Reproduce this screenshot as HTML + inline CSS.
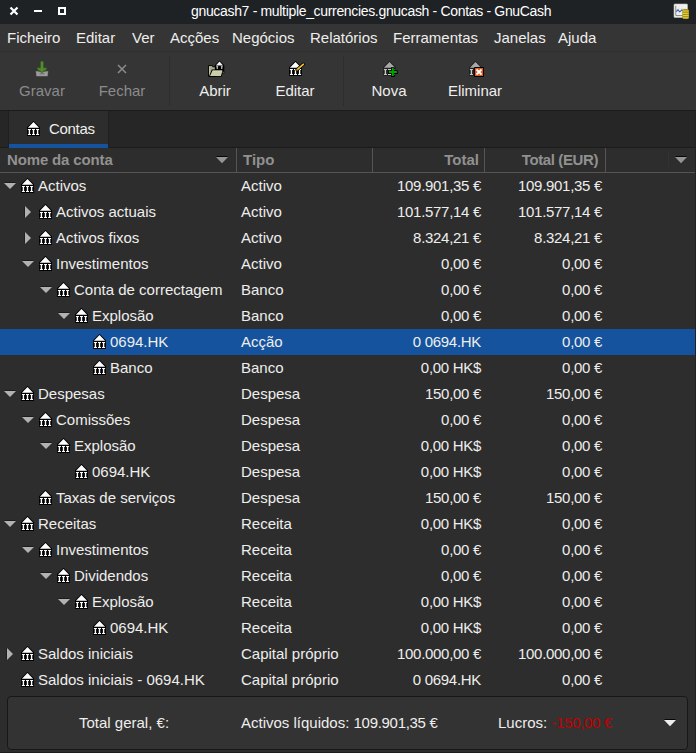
<!DOCTYPE html>
<html><head><meta charset="utf-8"><style>
*{margin:0;padding:0;box-sizing:border-box}
html,body{width:696px;height:753px;overflow:hidden;background:#2d2d2d;font-family:"Liberation Sans",sans-serif;font-size:15px;color:#eeeeec}
.a{position:absolute}
.t{position:absolute;white-space:nowrap;line-height:17px;height:17px}
.r{text-align:right}
.bk{position:absolute}
</style></head><body>

<div class="a" style="left:0;top:0;width:696px;height:24px;background:#1e2225"></div>
<svg class="a" style="left:9px;top:6px" width="10" height="10" viewBox="0 0 10 10"><path d="M1.5 1.5 L8.5 8.5 M8.5 1.5 L1.5 8.5" stroke="#fff" stroke-width="2.2"/></svg>
<div class="a" style="left:34px;top:10px;width:8px;height:2px;background:#fff"></div>
<div class="a" style="left:58px;top:7px;width:8px;height:8px;border:2px solid #fff"></div>
<div class="t" style="left:191px;top:3px;font-size:14px;letter-spacing:-0.33px;color:#ffffff">gnucash7 - multiple_currencies.gnucash - Contas - GnuCash</div>
<div class="a" style="left:0;top:24px;width:696px;height:28px;background:#353535"></div>
<div class="t" style="left:7px;top:29px;">Ficheiro</div>
<div class="t" style="left:76px;top:29px;">Editar</div>
<div class="t" style="left:132px;top:29px;">Ver</div>
<div class="t" style="left:170px;top:29px;">Acções</div>
<div class="t" style="left:232px;top:29px;">Negócios</div>
<div class="t" style="left:310px;top:29px;">Relatórios</div>
<div class="t" style="left:393px;top:29px;">Ferramentas</div>
<div class="t" style="left:494px;top:29px;">Janelas</div>
<div class="t" style="left:558px;top:29px;">Ajuda</div>
<div class="a" style="left:0;top:51px;width:696px;height:1px;background:#2f2f2f"></div>
<div class="a" style="left:0;top:52px;width:696px;height:58px;background:#353535"></div>
<div class="t" style="left:-8px;width:100px;text-align:center;top:82px;color:#8b8b8b">Gravar</div>
<div class="t" style="left:72px;width:100px;text-align:center;top:82px;color:#8b8b8b">Fechar</div>
<div class="t" style="left:165px;width:100px;text-align:center;top:82px;color:#eeeeec">Abrir</div>
<div class="t" style="left:245px;width:100px;text-align:center;top:82px;color:#eeeeec">Editar</div>
<div class="t" style="left:339px;width:100px;text-align:center;top:82px;color:#eeeeec">Nova</div>
<div class="t" style="left:425px;width:100px;text-align:center;top:82px;color:#eeeeec">Eliminar</div>
<div class="a" style="left:169px;top:56px;width:1px;height:50px;background:#2e2e2e"></div>
<svg class="a" style="left:34px;top:59px" width="16" height="19" viewBox="0 0 16 19"><path d="M1.5 12 L2.5 17.5 L13.5 17.5 L14.5 12 L12 12 L11.5 14 L4.5 14 L4 12 Z" fill="#8f8f8f" stroke="#3a3a3a" stroke-width="0.6"/><rect x="2.5" y="12.5" width="11" height="4.5" fill="#9c9c9c"/><rect x="5.5" y="14.3" width="5" height="1" fill="#6a6a6a"/><path d="M6.3 2.5 Q8 1.5 9.7 2.5 L9.7 8.5 L12.6 8.5 Q13.5 10 12 11.3 L8 13.6 L4 11.3 Q2.5 10 3.4 8.5 L6.3 8.5 Z" fill="#4a8228" stroke="#2f4a20" stroke-width="0.6"/><path d="M8 3 L8 12" stroke="#6a9a50" stroke-width="0.7"/></svg>
<svg class="a" style="left:117px;top:64px" width="10" height="10" viewBox="0 0 10 10"><path d="M1 1 L9 9 M9 1 L1 9" stroke="#8b8d8b" stroke-width="1.5"/></svg>
<svg class="a" style="left:207px;top:60px" width="18" height="18" viewBox="0 0 18 18"><path d="M1.2 5.2 L5.2 5.2 L6.4 6.4 L9 6.4 L9 16.8 L1.2 16.8 Z" fill="#000"/><path d="M2.1 6.1 L4.8 6.1 L5.9 7.3 L8.5 7.3 L8.5 10 L5.2 10 L3 15.9 L2.1 15.9 Z" fill="#a6aa88"/><path d="M2.5 6.5 L2.5 15.5" stroke="#d8dac4" stroke-width="0.6"/><path d="M12.5 0.4 L17.3 5.3 L17.3 13.3 L14.8 13.3 L14.8 10 L7.8 10 L7.8 5.3 Z" fill="#000"/><path d="M12.5 1.6 L16.1 5.4 L8.9 5.4 Z" fill="#f4f4f4"/><path d="M9 6.3h2.4l-0.7 1v1.8h-1v-1.8z M13.6 6.3h2.4l-0.7 1v1.8h-1v-1.8z" fill="#e8e8e8"/><circle cx="15.8" cy="12.3" r="0.7" fill="#ddd"/><path d="M4.8 9.6 L16.6 9.6 L14.6 16.8 L1.8 16.8 Z" fill="#000"/><path d="M5.5 10.4 L15.5 10.4 L13.9 15.9 L3 15.9 Z" fill="#c9cca6"/><path d="M5.8 10.9 L15 10.9" stroke="#e0e2cc" stroke-width="0.6"/></svg>
<svg class="a" style="left:289px;top:61px" width="13" height="15" viewBox="0 0 13 15"><path d="M6.5 -0.2 L13.2 6.5 L13.2 15.1 L-0.2 15.1 L-0.2 6.5 Z" fill="#000"/><path d="M6.5 1.1 L12.1 6.7 L0.9 6.7 Z" fill="#fff"/><path d="M0.9 7.9h3v1.1h-0.8v3.9h0.8v1.2h-3v-1.2h0.8v-3.9h-0.8z" fill="#fff"/><path d="M5 7.9h3v1.1h-0.8v3.9h0.8v1.2h-3v-1.2h0.8v-3.9h-0.8z" fill="#fff"/><path d="M9.1 7.9h3v1.1h-0.8v3.9h0.8v1.2h-3v-1.2h0.8v-3.9h-0.8z" fill="#fff"/></svg>
<svg class="a" style="left:294px;top:62px" width="11" height="11" viewBox="0 0 11 11"><path d="M3 7.8 L9.2 2.3" stroke="#000" stroke-width="3.2" stroke-linecap="round"/><path d="M3.2 7.6 L9.2 2.3" stroke="#f0c030" stroke-width="1.8" stroke-linecap="round"/><path d="M2.3 8.4 L3.3 7.5" stroke="#6a4a10" stroke-width="1"/></svg>
<svg class="a" style="left:383px;top:61px" width="13" height="15" viewBox="0 0 13 15"><path d="M6.5 -0.2 L13.2 6.5 L13.2 15.1 L-0.2 15.1 L-0.2 6.5 Z" fill="#202020"/><path d="M6.5 1.1 L12.1 6.7 L0.9 6.7 Z" fill="#a8a8a8"/><path d="M0.9 7.9h3v1.1h-0.8v3.9h0.8v1.2h-3v-1.2h0.8v-3.9h-0.8z" fill="#c8c8c8"/><path d="M5 7.9h3v1.1h-0.8v3.9h0.8v1.2h-3v-1.2h0.8v-3.9h-0.8z" fill="#c8c8c8"/><path d="M9.1 7.9h3v1.1h-0.8v3.9h0.8v1.2h-3v-1.2h0.8v-3.9h-0.8z" fill="#c8c8c8"/></svg>
<svg class="a" style="left:388px;top:67px" width="10" height="10" viewBox="0 0 10 10"><path d="M3 0.2h3.6v3.1h3.1v3.6h-3.1v3.1h-3.6v-3.1h-3.1v-3.6h3.1z" fill="#000"/><path d="M3.8 1.1h2v3h3v2h-3v3h-2v-3h-3v-2h3z" fill="#00a500"/></svg>
<svg class="a" style="left:469px;top:61px" width="13" height="15" viewBox="0 0 13 15"><path d="M6.5 -0.2 L13.2 6.5 L13.2 15.1 L-0.2 15.1 L-0.2 6.5 Z" fill="#202020"/><path d="M6.5 1.1 L12.1 6.7 L0.9 6.7 Z" fill="#a8a8a8"/><path d="M0.9 7.9h3v1.1h-0.8v3.9h0.8v1.2h-3v-1.2h0.8v-3.9h-0.8z" fill="#c8c8c8"/><path d="M5 7.9h3v1.1h-0.8v3.9h0.8v1.2h-3v-1.2h0.8v-3.9h-0.8z" fill="#c8c8c8"/><path d="M9.1 7.9h3v1.1h-0.8v3.9h0.8v1.2h-3v-1.2h0.8v-3.9h-0.8z" fill="#c8c8c8"/></svg>
<svg class="a" style="left:474px;top:67px" width="10" height="10" viewBox="0 0 10 10"><rect x="0" y="0" width="10" height="10" rx="1" fill="#000"/><rect x="1" y="1" width="8" height="8" fill="#e2561e"/><path d="M2.5 2.5 L7.5 7.5 M7.5 2.5 L2.5 7.5" stroke="#fff" stroke-width="1.8"/></svg>
<svg class="a" style="left:673px;top:3px" width="17" height="17" viewBox="0 0 17 17"><rect x="1" y="1" width="13.5" height="13.5" rx="0.8" fill="#f2f2ef" stroke="#bdbdbd" stroke-width="0.6"/><path d="M2.8 2.8 L2.8 12.6 L12.5 12.6" stroke="#7a7a7a" stroke-width="0.9" fill="none"/><path d="M6 2.5 V12 M9 2.5 V12 M3 5.5 H13 M3 9 H13" stroke="#dcdcdc" stroke-width="0.5"/><path d="M3.3 8.5 L5 6.8 L6.8 8.8 L8.8 7 L10 7.5" stroke="#3a5fb0" stroke-width="1.1" fill="none"/><rect x="9.3" y="6" width="6.7" height="10" rx="2" fill="#a89010"/><path d="M9.8 8h5.7 M9.8 10.3h5.7 M9.8 12.6h5.7 M9.8 14.8h5.7" stroke="#e8d84a" stroke-width="1"/></svg>
<div class="a" style="left:343px;top:56px;width:1px;height:50px;background:#2e2e2e"></div>
<div class="a" style="left:0;top:110px;width:696px;height:37px;background:#262626"></div>
<div class="a" style="left:0;top:110px;width:696px;height:1px;background:#1b1b1b"></div>
<div class="a" style="left:0;top:147px;width:696px;height:1px;background:#1b1b1b"></div>
<div class="a" style="left:8px;top:111px;width:1px;height:37px;background:#1f1f1f"></div>
<div class="a" style="left:108px;top:111px;width:1px;height:37px;background:#1f1f1f"></div>
<div class="a" style="left:9px;top:111px;width:99px;height:37px;background:#2d2d2d"></div>
<div class="a" style="left:9px;top:144px;width:99px;height:4px;background:#15539e"></div>
<svg class="bk" style="left:27px;top:121px" width="13" height="15" viewBox="0 0 13 15"><path d="M6.5 -0.2 L13.2 6.5 L13.2 15.1 L-0.2 15.1 L-0.2 6.5 Z" fill="#000"/><path d="M6.5 1.1 L12.1 6.7 L0.9 6.7 Z" fill="#fff"/><path d="M0.9 7.9h3v1.1h-0.8v3.9h0.8v1.2h-3v-1.2h0.8v-3.9h-0.8z" fill="#fff"/><path d="M5 7.9h3v1.1h-0.8v3.9h0.8v1.2h-3v-1.2h0.8v-3.9h-0.8z" fill="#fff"/><path d="M9.1 7.9h3v1.1h-0.8v3.9h0.8v1.2h-3v-1.2h0.8v-3.9h-0.8z" fill="#fff"/></svg>
<div class="t" style="left:49px;top:120px;letter-spacing:-0.3px">Contas</div>
<div class="a" style="left:0;top:148px;width:696px;height:24px;background:#2d2d2d"></div>
<div class="a" style="left:0;top:172px;width:696px;height:1px;background:#555"></div>
<div class="a" style="left:236px;top:148px;width:1px;height:24px;background:#555"></div>
<div class="a" style="left:372px;top:148px;width:1px;height:24px;background:#555"></div>
<div class="a" style="left:484px;top:148px;width:1px;height:24px;background:#555"></div>
<div class="a" style="left:605px;top:148px;width:1px;height:24px;background:#555"></div>
<div class="a" style="left:668px;top:152px;width:1px;height:15px;background:#333"></div>
<div class="t" style="left:7px;top:151px;font-weight:bold;color:#919190;letter-spacing:-0.15px">Nome da conta</div>
<div class="t" style="left:243px;top:151px;font-weight:bold;color:#919190">Tipo</div>
<div class="t r" style="right:217px;top:151px;font-weight:bold;color:#919190">Total</div>
<div class="t r" style="right:98px;top:151px;font-weight:bold;color:#919190;letter-spacing:-0.4px">Total (EUR)</div>
<svg class="a" style="left:216px;top:156px" width="12" height="8" viewBox="0 0 12 8"><rect x="0.5" y="0" width="11" height="1" fill="#000" opacity="0.85"/><path d="M0 1 L12 1 L6 7.3 Z" fill="#959595"/></svg>
<svg class="a" style="left:675px;top:156px" width="12" height="8" viewBox="0 0 12 8"><rect x="0.5" y="0" width="11" height="1" fill="#000" opacity="0.85"/><path d="M0 1 L12 1 L6 7.3 Z" fill="#959595"/></svg>
<svg class="a" style="left:4px;top:182px" width="12" height="8" viewBox="0 0 12 8"><rect x="0.5" y="0" width="11" height="1" fill="#000" opacity="0.4"/><path d="M0 1 L12 1 L6 7 Z" fill="#b2b2b2"/></svg>
<svg class="bk" style="left:21px;top:178px" width="13" height="15" viewBox="0 0 13 15"><path d="M6.5 -0.2 L13.2 6.5 L13.2 15.1 L-0.2 15.1 L-0.2 6.5 Z" fill="#000"/><path d="M6.5 1.1 L12.1 6.7 L0.9 6.7 Z" fill="#fff"/><path d="M0.9 7.9h3v1.1h-0.8v3.9h0.8v1.2h-3v-1.2h0.8v-3.9h-0.8z" fill="#fff"/><path d="M5 7.9h3v1.1h-0.8v3.9h0.8v1.2h-3v-1.2h0.8v-3.9h-0.8z" fill="#fff"/><path d="M9.1 7.9h3v1.1h-0.8v3.9h0.8v1.2h-3v-1.2h0.8v-3.9h-0.8z" fill="#fff"/></svg>
<div class="t" style="left:38px;top:177px;">Activos</div>
<div class="t" style="left:241px;top:177px;">Activo</div>
<div class="t r" style="right:215px;top:177px;letter-spacing:-0.3px">109.901,35 €</div>
<div class="t r" style="right:94px;top:177px;letter-spacing:-0.3px">109.901,35 €</div>
<svg class="a" style="left:24px;top:206px" width="8" height="12" viewBox="0 0 8 12"><rect x="0" y="0.5" width="1" height="11" fill="#000" opacity="0.3"/><path d="M1 0 L1 12 L7 6 Z" fill="#b2b2b2"/></svg>
<svg class="bk" style="left:39px;top:204px" width="13" height="15" viewBox="0 0 13 15"><path d="M6.5 -0.2 L13.2 6.5 L13.2 15.1 L-0.2 15.1 L-0.2 6.5 Z" fill="#000"/><path d="M6.5 1.1 L12.1 6.7 L0.9 6.7 Z" fill="#fff"/><path d="M0.9 7.9h3v1.1h-0.8v3.9h0.8v1.2h-3v-1.2h0.8v-3.9h-0.8z" fill="#fff"/><path d="M5 7.9h3v1.1h-0.8v3.9h0.8v1.2h-3v-1.2h0.8v-3.9h-0.8z" fill="#fff"/><path d="M9.1 7.9h3v1.1h-0.8v3.9h0.8v1.2h-3v-1.2h0.8v-3.9h-0.8z" fill="#fff"/></svg>
<div class="t" style="left:56px;top:203px;">Activos actuais</div>
<div class="t" style="left:241px;top:203px;">Activo</div>
<div class="t r" style="right:215px;top:203px;letter-spacing:-0.3px">101.577,14 €</div>
<div class="t r" style="right:94px;top:203px;letter-spacing:-0.3px">101.577,14 €</div>
<svg class="a" style="left:24px;top:232px" width="8" height="12" viewBox="0 0 8 12"><rect x="0" y="0.5" width="1" height="11" fill="#000" opacity="0.3"/><path d="M1 0 L1 12 L7 6 Z" fill="#b2b2b2"/></svg>
<svg class="bk" style="left:39px;top:230px" width="13" height="15" viewBox="0 0 13 15"><path d="M6.5 -0.2 L13.2 6.5 L13.2 15.1 L-0.2 15.1 L-0.2 6.5 Z" fill="#000"/><path d="M6.5 1.1 L12.1 6.7 L0.9 6.7 Z" fill="#fff"/><path d="M0.9 7.9h3v1.1h-0.8v3.9h0.8v1.2h-3v-1.2h0.8v-3.9h-0.8z" fill="#fff"/><path d="M5 7.9h3v1.1h-0.8v3.9h0.8v1.2h-3v-1.2h0.8v-3.9h-0.8z" fill="#fff"/><path d="M9.1 7.9h3v1.1h-0.8v3.9h0.8v1.2h-3v-1.2h0.8v-3.9h-0.8z" fill="#fff"/></svg>
<div class="t" style="left:56px;top:229px;">Activos fixos</div>
<div class="t" style="left:241px;top:229px;">Activo</div>
<div class="t r" style="right:215px;top:229px;letter-spacing:-0.3px">8.324,21 €</div>
<div class="t r" style="right:94px;top:229px;letter-spacing:-0.3px">8.324,21 €</div>
<svg class="a" style="left:22px;top:260px" width="12" height="8" viewBox="0 0 12 8"><rect x="0.5" y="0" width="11" height="1" fill="#000" opacity="0.4"/><path d="M0 1 L12 1 L6 7 Z" fill="#b2b2b2"/></svg>
<svg class="bk" style="left:39px;top:256px" width="13" height="15" viewBox="0 0 13 15"><path d="M6.5 -0.2 L13.2 6.5 L13.2 15.1 L-0.2 15.1 L-0.2 6.5 Z" fill="#000"/><path d="M6.5 1.1 L12.1 6.7 L0.9 6.7 Z" fill="#fff"/><path d="M0.9 7.9h3v1.1h-0.8v3.9h0.8v1.2h-3v-1.2h0.8v-3.9h-0.8z" fill="#fff"/><path d="M5 7.9h3v1.1h-0.8v3.9h0.8v1.2h-3v-1.2h0.8v-3.9h-0.8z" fill="#fff"/><path d="M9.1 7.9h3v1.1h-0.8v3.9h0.8v1.2h-3v-1.2h0.8v-3.9h-0.8z" fill="#fff"/></svg>
<div class="t" style="left:56px;top:255px;">Investimentos</div>
<div class="t" style="left:241px;top:255px;">Activo</div>
<div class="t r" style="right:215px;top:255px;letter-spacing:-0.3px">0,00 €</div>
<div class="t r" style="right:94px;top:255px;letter-spacing:-0.3px">0,00 €</div>
<svg class="a" style="left:40px;top:286px" width="12" height="8" viewBox="0 0 12 8"><rect x="0.5" y="0" width="11" height="1" fill="#000" opacity="0.4"/><path d="M0 1 L12 1 L6 7 Z" fill="#b2b2b2"/></svg>
<svg class="bk" style="left:57px;top:282px" width="13" height="15" viewBox="0 0 13 15"><path d="M6.5 -0.2 L13.2 6.5 L13.2 15.1 L-0.2 15.1 L-0.2 6.5 Z" fill="#000"/><path d="M6.5 1.1 L12.1 6.7 L0.9 6.7 Z" fill="#fff"/><path d="M0.9 7.9h3v1.1h-0.8v3.9h0.8v1.2h-3v-1.2h0.8v-3.9h-0.8z" fill="#fff"/><path d="M5 7.9h3v1.1h-0.8v3.9h0.8v1.2h-3v-1.2h0.8v-3.9h-0.8z" fill="#fff"/><path d="M9.1 7.9h3v1.1h-0.8v3.9h0.8v1.2h-3v-1.2h0.8v-3.9h-0.8z" fill="#fff"/></svg>
<div class="t" style="left:74px;top:281px;">Conta de correctagem</div>
<div class="t" style="left:241px;top:281px;">Banco</div>
<div class="t r" style="right:215px;top:281px;letter-spacing:-0.3px">0,00 €</div>
<div class="t r" style="right:94px;top:281px;letter-spacing:-0.3px">0,00 €</div>
<svg class="a" style="left:58px;top:312px" width="12" height="8" viewBox="0 0 12 8"><rect x="0.5" y="0" width="11" height="1" fill="#000" opacity="0.4"/><path d="M0 1 L12 1 L6 7 Z" fill="#b2b2b2"/></svg>
<svg class="bk" style="left:75px;top:308px" width="13" height="15" viewBox="0 0 13 15"><path d="M6.5 -0.2 L13.2 6.5 L13.2 15.1 L-0.2 15.1 L-0.2 6.5 Z" fill="#000"/><path d="M6.5 1.1 L12.1 6.7 L0.9 6.7 Z" fill="#fff"/><path d="M0.9 7.9h3v1.1h-0.8v3.9h0.8v1.2h-3v-1.2h0.8v-3.9h-0.8z" fill="#fff"/><path d="M5 7.9h3v1.1h-0.8v3.9h0.8v1.2h-3v-1.2h0.8v-3.9h-0.8z" fill="#fff"/><path d="M9.1 7.9h3v1.1h-0.8v3.9h0.8v1.2h-3v-1.2h0.8v-3.9h-0.8z" fill="#fff"/></svg>
<div class="t" style="left:92px;top:307px;">Explosão</div>
<div class="t" style="left:241px;top:307px;">Banco</div>
<div class="t r" style="right:215px;top:307px;letter-spacing:-0.3px">0,00 €</div>
<div class="t r" style="right:94px;top:307px;letter-spacing:-0.3px">0,00 €</div>
<div class="a" style="left:0;top:329px;width:696px;height:26px;background:#15539e"></div>
<svg class="bk" style="left:93px;top:334px" width="13" height="15" viewBox="0 0 13 15"><path d="M6.5 -0.2 L13.2 6.5 L13.2 15.1 L-0.2 15.1 L-0.2 6.5 Z" fill="#000"/><path d="M6.5 1.1 L12.1 6.7 L0.9 6.7 Z" fill="#fff"/><path d="M0.9 7.9h3v1.1h-0.8v3.9h0.8v1.2h-3v-1.2h0.8v-3.9h-0.8z" fill="#fff"/><path d="M5 7.9h3v1.1h-0.8v3.9h0.8v1.2h-3v-1.2h0.8v-3.9h-0.8z" fill="#fff"/><path d="M9.1 7.9h3v1.1h-0.8v3.9h0.8v1.2h-3v-1.2h0.8v-3.9h-0.8z" fill="#fff"/></svg>
<div class="t" style="left:110px;top:333px;">0694.HK</div>
<div class="t" style="left:241px;top:333px;">Acção</div>
<div class="t r" style="right:215px;top:333px;letter-spacing:-0.3px">0 0694.HK</div>
<div class="t r" style="right:94px;top:333px;letter-spacing:-0.3px">0,00 €</div>
<svg class="bk" style="left:93px;top:360px" width="13" height="15" viewBox="0 0 13 15"><path d="M6.5 -0.2 L13.2 6.5 L13.2 15.1 L-0.2 15.1 L-0.2 6.5 Z" fill="#000"/><path d="M6.5 1.1 L12.1 6.7 L0.9 6.7 Z" fill="#fff"/><path d="M0.9 7.9h3v1.1h-0.8v3.9h0.8v1.2h-3v-1.2h0.8v-3.9h-0.8z" fill="#fff"/><path d="M5 7.9h3v1.1h-0.8v3.9h0.8v1.2h-3v-1.2h0.8v-3.9h-0.8z" fill="#fff"/><path d="M9.1 7.9h3v1.1h-0.8v3.9h0.8v1.2h-3v-1.2h0.8v-3.9h-0.8z" fill="#fff"/></svg>
<div class="t" style="left:110px;top:359px;">Banco</div>
<div class="t" style="left:241px;top:359px;">Banco</div>
<div class="t r" style="right:215px;top:359px;letter-spacing:-0.3px">0,00 HK$</div>
<div class="t r" style="right:94px;top:359px;letter-spacing:-0.3px">0,00 €</div>
<svg class="a" style="left:4px;top:390px" width="12" height="8" viewBox="0 0 12 8"><rect x="0.5" y="0" width="11" height="1" fill="#000" opacity="0.4"/><path d="M0 1 L12 1 L6 7 Z" fill="#b2b2b2"/></svg>
<svg class="bk" style="left:21px;top:386px" width="13" height="15" viewBox="0 0 13 15"><path d="M6.5 -0.2 L13.2 6.5 L13.2 15.1 L-0.2 15.1 L-0.2 6.5 Z" fill="#000"/><path d="M6.5 1.1 L12.1 6.7 L0.9 6.7 Z" fill="#fff"/><path d="M0.9 7.9h3v1.1h-0.8v3.9h0.8v1.2h-3v-1.2h0.8v-3.9h-0.8z" fill="#fff"/><path d="M5 7.9h3v1.1h-0.8v3.9h0.8v1.2h-3v-1.2h0.8v-3.9h-0.8z" fill="#fff"/><path d="M9.1 7.9h3v1.1h-0.8v3.9h0.8v1.2h-3v-1.2h0.8v-3.9h-0.8z" fill="#fff"/></svg>
<div class="t" style="left:38px;top:385px;">Despesas</div>
<div class="t" style="left:241px;top:385px;">Despesa</div>
<div class="t r" style="right:215px;top:385px;letter-spacing:-0.3px">150,00 €</div>
<div class="t r" style="right:94px;top:385px;letter-spacing:-0.3px">150,00 €</div>
<svg class="a" style="left:22px;top:416px" width="12" height="8" viewBox="0 0 12 8"><rect x="0.5" y="0" width="11" height="1" fill="#000" opacity="0.4"/><path d="M0 1 L12 1 L6 7 Z" fill="#b2b2b2"/></svg>
<svg class="bk" style="left:39px;top:412px" width="13" height="15" viewBox="0 0 13 15"><path d="M6.5 -0.2 L13.2 6.5 L13.2 15.1 L-0.2 15.1 L-0.2 6.5 Z" fill="#000"/><path d="M6.5 1.1 L12.1 6.7 L0.9 6.7 Z" fill="#fff"/><path d="M0.9 7.9h3v1.1h-0.8v3.9h0.8v1.2h-3v-1.2h0.8v-3.9h-0.8z" fill="#fff"/><path d="M5 7.9h3v1.1h-0.8v3.9h0.8v1.2h-3v-1.2h0.8v-3.9h-0.8z" fill="#fff"/><path d="M9.1 7.9h3v1.1h-0.8v3.9h0.8v1.2h-3v-1.2h0.8v-3.9h-0.8z" fill="#fff"/></svg>
<div class="t" style="left:56px;top:411px;">Comissões</div>
<div class="t" style="left:241px;top:411px;">Despesa</div>
<div class="t r" style="right:215px;top:411px;letter-spacing:-0.3px">0,00 €</div>
<div class="t r" style="right:94px;top:411px;letter-spacing:-0.3px">0,00 €</div>
<svg class="a" style="left:40px;top:442px" width="12" height="8" viewBox="0 0 12 8"><rect x="0.5" y="0" width="11" height="1" fill="#000" opacity="0.4"/><path d="M0 1 L12 1 L6 7 Z" fill="#b2b2b2"/></svg>
<svg class="bk" style="left:57px;top:438px" width="13" height="15" viewBox="0 0 13 15"><path d="M6.5 -0.2 L13.2 6.5 L13.2 15.1 L-0.2 15.1 L-0.2 6.5 Z" fill="#000"/><path d="M6.5 1.1 L12.1 6.7 L0.9 6.7 Z" fill="#fff"/><path d="M0.9 7.9h3v1.1h-0.8v3.9h0.8v1.2h-3v-1.2h0.8v-3.9h-0.8z" fill="#fff"/><path d="M5 7.9h3v1.1h-0.8v3.9h0.8v1.2h-3v-1.2h0.8v-3.9h-0.8z" fill="#fff"/><path d="M9.1 7.9h3v1.1h-0.8v3.9h0.8v1.2h-3v-1.2h0.8v-3.9h-0.8z" fill="#fff"/></svg>
<div class="t" style="left:74px;top:437px;">Explosão</div>
<div class="t" style="left:241px;top:437px;">Despesa</div>
<div class="t r" style="right:215px;top:437px;letter-spacing:-0.3px">0,00 HK$</div>
<div class="t r" style="right:94px;top:437px;letter-spacing:-0.3px">0,00 €</div>
<svg class="bk" style="left:75px;top:464px" width="13" height="15" viewBox="0 0 13 15"><path d="M6.5 -0.2 L13.2 6.5 L13.2 15.1 L-0.2 15.1 L-0.2 6.5 Z" fill="#000"/><path d="M6.5 1.1 L12.1 6.7 L0.9 6.7 Z" fill="#fff"/><path d="M0.9 7.9h3v1.1h-0.8v3.9h0.8v1.2h-3v-1.2h0.8v-3.9h-0.8z" fill="#fff"/><path d="M5 7.9h3v1.1h-0.8v3.9h0.8v1.2h-3v-1.2h0.8v-3.9h-0.8z" fill="#fff"/><path d="M9.1 7.9h3v1.1h-0.8v3.9h0.8v1.2h-3v-1.2h0.8v-3.9h-0.8z" fill="#fff"/></svg>
<div class="t" style="left:92px;top:463px;">0694.HK</div>
<div class="t" style="left:241px;top:463px;">Despesa</div>
<div class="t r" style="right:215px;top:463px;letter-spacing:-0.3px">0,00 HK$</div>
<div class="t r" style="right:94px;top:463px;letter-spacing:-0.3px">0,00 €</div>
<svg class="bk" style="left:39px;top:490px" width="13" height="15" viewBox="0 0 13 15"><path d="M6.5 -0.2 L13.2 6.5 L13.2 15.1 L-0.2 15.1 L-0.2 6.5 Z" fill="#000"/><path d="M6.5 1.1 L12.1 6.7 L0.9 6.7 Z" fill="#fff"/><path d="M0.9 7.9h3v1.1h-0.8v3.9h0.8v1.2h-3v-1.2h0.8v-3.9h-0.8z" fill="#fff"/><path d="M5 7.9h3v1.1h-0.8v3.9h0.8v1.2h-3v-1.2h0.8v-3.9h-0.8z" fill="#fff"/><path d="M9.1 7.9h3v1.1h-0.8v3.9h0.8v1.2h-3v-1.2h0.8v-3.9h-0.8z" fill="#fff"/></svg>
<div class="t" style="left:56px;top:489px;">Taxas de serviços</div>
<div class="t" style="left:241px;top:489px;">Despesa</div>
<div class="t r" style="right:215px;top:489px;letter-spacing:-0.3px">150,00 €</div>
<div class="t r" style="right:94px;top:489px;letter-spacing:-0.3px">150,00 €</div>
<svg class="a" style="left:4px;top:520px" width="12" height="8" viewBox="0 0 12 8"><rect x="0.5" y="0" width="11" height="1" fill="#000" opacity="0.4"/><path d="M0 1 L12 1 L6 7 Z" fill="#b2b2b2"/></svg>
<svg class="bk" style="left:21px;top:516px" width="13" height="15" viewBox="0 0 13 15"><path d="M6.5 -0.2 L13.2 6.5 L13.2 15.1 L-0.2 15.1 L-0.2 6.5 Z" fill="#000"/><path d="M6.5 1.1 L12.1 6.7 L0.9 6.7 Z" fill="#fff"/><path d="M0.9 7.9h3v1.1h-0.8v3.9h0.8v1.2h-3v-1.2h0.8v-3.9h-0.8z" fill="#fff"/><path d="M5 7.9h3v1.1h-0.8v3.9h0.8v1.2h-3v-1.2h0.8v-3.9h-0.8z" fill="#fff"/><path d="M9.1 7.9h3v1.1h-0.8v3.9h0.8v1.2h-3v-1.2h0.8v-3.9h-0.8z" fill="#fff"/></svg>
<div class="t" style="left:38px;top:515px;">Receitas</div>
<div class="t" style="left:241px;top:515px;">Receita</div>
<div class="t r" style="right:215px;top:515px;letter-spacing:-0.3px">0,00 HK$</div>
<div class="t r" style="right:94px;top:515px;letter-spacing:-0.3px">0,00 €</div>
<svg class="a" style="left:22px;top:546px" width="12" height="8" viewBox="0 0 12 8"><rect x="0.5" y="0" width="11" height="1" fill="#000" opacity="0.4"/><path d="M0 1 L12 1 L6 7 Z" fill="#b2b2b2"/></svg>
<svg class="bk" style="left:39px;top:542px" width="13" height="15" viewBox="0 0 13 15"><path d="M6.5 -0.2 L13.2 6.5 L13.2 15.1 L-0.2 15.1 L-0.2 6.5 Z" fill="#000"/><path d="M6.5 1.1 L12.1 6.7 L0.9 6.7 Z" fill="#fff"/><path d="M0.9 7.9h3v1.1h-0.8v3.9h0.8v1.2h-3v-1.2h0.8v-3.9h-0.8z" fill="#fff"/><path d="M5 7.9h3v1.1h-0.8v3.9h0.8v1.2h-3v-1.2h0.8v-3.9h-0.8z" fill="#fff"/><path d="M9.1 7.9h3v1.1h-0.8v3.9h0.8v1.2h-3v-1.2h0.8v-3.9h-0.8z" fill="#fff"/></svg>
<div class="t" style="left:56px;top:541px;">Investimentos</div>
<div class="t" style="left:241px;top:541px;">Receita</div>
<div class="t r" style="right:215px;top:541px;letter-spacing:-0.3px">0,00 €</div>
<div class="t r" style="right:94px;top:541px;letter-spacing:-0.3px">0,00 €</div>
<svg class="a" style="left:40px;top:572px" width="12" height="8" viewBox="0 0 12 8"><rect x="0.5" y="0" width="11" height="1" fill="#000" opacity="0.4"/><path d="M0 1 L12 1 L6 7 Z" fill="#b2b2b2"/></svg>
<svg class="bk" style="left:57px;top:568px" width="13" height="15" viewBox="0 0 13 15"><path d="M6.5 -0.2 L13.2 6.5 L13.2 15.1 L-0.2 15.1 L-0.2 6.5 Z" fill="#000"/><path d="M6.5 1.1 L12.1 6.7 L0.9 6.7 Z" fill="#fff"/><path d="M0.9 7.9h3v1.1h-0.8v3.9h0.8v1.2h-3v-1.2h0.8v-3.9h-0.8z" fill="#fff"/><path d="M5 7.9h3v1.1h-0.8v3.9h0.8v1.2h-3v-1.2h0.8v-3.9h-0.8z" fill="#fff"/><path d="M9.1 7.9h3v1.1h-0.8v3.9h0.8v1.2h-3v-1.2h0.8v-3.9h-0.8z" fill="#fff"/></svg>
<div class="t" style="left:74px;top:567px;">Dividendos</div>
<div class="t" style="left:241px;top:567px;">Receita</div>
<div class="t r" style="right:215px;top:567px;letter-spacing:-0.3px">0,00 €</div>
<div class="t r" style="right:94px;top:567px;letter-spacing:-0.3px">0,00 €</div>
<svg class="a" style="left:58px;top:598px" width="12" height="8" viewBox="0 0 12 8"><rect x="0.5" y="0" width="11" height="1" fill="#000" opacity="0.4"/><path d="M0 1 L12 1 L6 7 Z" fill="#b2b2b2"/></svg>
<svg class="bk" style="left:75px;top:594px" width="13" height="15" viewBox="0 0 13 15"><path d="M6.5 -0.2 L13.2 6.5 L13.2 15.1 L-0.2 15.1 L-0.2 6.5 Z" fill="#000"/><path d="M6.5 1.1 L12.1 6.7 L0.9 6.7 Z" fill="#fff"/><path d="M0.9 7.9h3v1.1h-0.8v3.9h0.8v1.2h-3v-1.2h0.8v-3.9h-0.8z" fill="#fff"/><path d="M5 7.9h3v1.1h-0.8v3.9h0.8v1.2h-3v-1.2h0.8v-3.9h-0.8z" fill="#fff"/><path d="M9.1 7.9h3v1.1h-0.8v3.9h0.8v1.2h-3v-1.2h0.8v-3.9h-0.8z" fill="#fff"/></svg>
<div class="t" style="left:92px;top:593px;">Explosão</div>
<div class="t" style="left:241px;top:593px;">Receita</div>
<div class="t r" style="right:215px;top:593px;letter-spacing:-0.3px">0,00 HK$</div>
<div class="t r" style="right:94px;top:593px;letter-spacing:-0.3px">0,00 €</div>
<svg class="bk" style="left:93px;top:620px" width="13" height="15" viewBox="0 0 13 15"><path d="M6.5 -0.2 L13.2 6.5 L13.2 15.1 L-0.2 15.1 L-0.2 6.5 Z" fill="#000"/><path d="M6.5 1.1 L12.1 6.7 L0.9 6.7 Z" fill="#fff"/><path d="M0.9 7.9h3v1.1h-0.8v3.9h0.8v1.2h-3v-1.2h0.8v-3.9h-0.8z" fill="#fff"/><path d="M5 7.9h3v1.1h-0.8v3.9h0.8v1.2h-3v-1.2h0.8v-3.9h-0.8z" fill="#fff"/><path d="M9.1 7.9h3v1.1h-0.8v3.9h0.8v1.2h-3v-1.2h0.8v-3.9h-0.8z" fill="#fff"/></svg>
<div class="t" style="left:110px;top:619px;">0694.HK</div>
<div class="t" style="left:241px;top:619px;">Receita</div>
<div class="t r" style="right:215px;top:619px;letter-spacing:-0.3px">0,00 HK$</div>
<div class="t r" style="right:94px;top:619px;letter-spacing:-0.3px">0,00 €</div>
<svg class="a" style="left:6px;top:648px" width="8" height="12" viewBox="0 0 8 12"><rect x="0" y="0.5" width="1" height="11" fill="#000" opacity="0.3"/><path d="M1 0 L1 12 L7 6 Z" fill="#b2b2b2"/></svg>
<svg class="bk" style="left:21px;top:646px" width="13" height="15" viewBox="0 0 13 15"><path d="M6.5 -0.2 L13.2 6.5 L13.2 15.1 L-0.2 15.1 L-0.2 6.5 Z" fill="#000"/><path d="M6.5 1.1 L12.1 6.7 L0.9 6.7 Z" fill="#fff"/><path d="M0.9 7.9h3v1.1h-0.8v3.9h0.8v1.2h-3v-1.2h0.8v-3.9h-0.8z" fill="#fff"/><path d="M5 7.9h3v1.1h-0.8v3.9h0.8v1.2h-3v-1.2h0.8v-3.9h-0.8z" fill="#fff"/><path d="M9.1 7.9h3v1.1h-0.8v3.9h0.8v1.2h-3v-1.2h0.8v-3.9h-0.8z" fill="#fff"/></svg>
<div class="t" style="left:38px;top:645px;">Saldos iniciais</div>
<div class="t" style="left:241px;top:645px;">Capital próprio</div>
<div class="t r" style="right:215px;top:645px;letter-spacing:-0.3px">100.000,00 €</div>
<div class="t r" style="right:94px;top:645px;letter-spacing:-0.3px">100.000,00 €</div>
<svg class="bk" style="left:21px;top:672px" width="13" height="15" viewBox="0 0 13 15"><path d="M6.5 -0.2 L13.2 6.5 L13.2 15.1 L-0.2 15.1 L-0.2 6.5 Z" fill="#000"/><path d="M6.5 1.1 L12.1 6.7 L0.9 6.7 Z" fill="#fff"/><path d="M0.9 7.9h3v1.1h-0.8v3.9h0.8v1.2h-3v-1.2h0.8v-3.9h-0.8z" fill="#fff"/><path d="M5 7.9h3v1.1h-0.8v3.9h0.8v1.2h-3v-1.2h0.8v-3.9h-0.8z" fill="#fff"/><path d="M9.1 7.9h3v1.1h-0.8v3.9h0.8v1.2h-3v-1.2h0.8v-3.9h-0.8z" fill="#fff"/></svg>
<div class="t" style="left:38px;top:671px;">Saldos iniciais - 0694.HK</div>
<div class="t" style="left:241px;top:671px;">Capital próprio</div>
<div class="t r" style="right:215px;top:671px;letter-spacing:-0.3px">0 0694.HK</div>
<div class="t r" style="right:94px;top:671px;letter-spacing:-0.3px">0,00 €</div>
<div class="a" style="left:0;top:693px;width:696px;height:60px;background:#2d2d2d"></div>
<div class="a" style="left:7px;top:696px;width:681px;height:54px;background:#333333;border:1px solid #171717;border-radius:4px"></div>
<div class="a" style="left:0;top:752px;width:696px;height:1px;background:#1c1c1c"></div>
<div class="t" style="left:79px;top:714px;">Total geral, €:</div>
<div class="t" style="left:241px;top:714px;">Activos líquidos: <span style="letter-spacing:-0.3px">109.901,35 €</span></div>
<div class="t" style="left:498px;top:714px;">Lucros: <span style="color:#c00000;letter-spacing:-0.3px">-150,00 €</span></div>
<svg class="a" style="left:664px;top:719px" width="12" height="8" viewBox="0 0 12 8"><rect x="0.5" y="0" width="11" height="1" fill="#000" opacity="0.85"/><path d="M0 1 L12 1 L6 7.2 Z" fill="#eeeeec"/></svg>
<div class="a" style="left:695px;top:111px;width:1px;height:642px;background:#222"></div>
</body></html>
